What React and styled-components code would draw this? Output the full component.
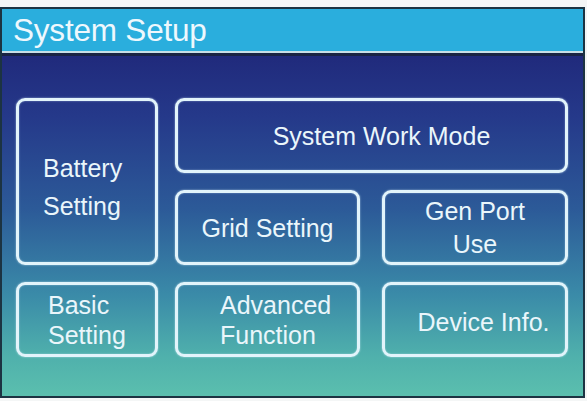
import React from "react";
import styled, { createGlobalStyle } from "styled-components";

const Global = createGlobalStyle`
  html, body { margin: 0; padding: 0; background: #f4f6f6; }
  body { font-family: "Liberation Sans", Arial, sans-serif; }
`;

const Frame = styled.div`
  margin-top: 7px;
  width: 581px;
  height: 387px;
  border: 2px solid #1c3342;
  display: flex;
  flex-direction: column;
  overflow: hidden;
`;

const Header = styled.div`
  height: 42px;
  flex: none;
  background: #2aaedd;
  border-bottom: 2px solid #c8dfe7;
  display: flex;
  align-items: center;
  padding-left: 11px;
  color: #eef8fd;
  font-size: 31.5px;
  letter-spacing: -0.2px;
`;

const Body = styled.div`
  flex: 1;
  border-top: 3px solid #1a2444;
  background: linear-gradient(180deg, #202a7c 0%, #25398a 18%, #2c5a98 45%, #3a8aa8 70%, #4fb0ac 88%, #5bbfae 100%);
  padding: 42px 0 0 14px;
`;

const Grid = styled.div`
  display: grid;
  grid-template-columns: 142px 17px 185px 22px 186px;
  grid-template-rows: 75px 17px 75px 17px 75px;
`;

const Tile = styled.div`
  grid-column: ${(p) => p.$col};
  grid-row: ${(p) => p.$row};
  box-sizing: border-box;
  border: 3px solid #e2f4fb;
  border-radius: 9px;
  box-shadow: 0 0 2px rgba(220, 245, 255, 0.7), inset 0 0 2px rgba(220, 245, 255, 0.5);
  display: flex;
  align-items: center;
  justify-content: ${(p) => (p.$left ? "flex-start" : "center")};
  text-align: ${(p) => (p.$left ? "left" : "center")};
  padding-left: ${(p) => p.$pl || 0}px;
  padding-top: ${(p) => p.$pt || 0}px;
  color: #eaf6fb;
  font-size: 25px;
  line-height: ${(p) => p.$lh || 30}px;
  white-space: nowrap;
`;

export default function App() {
  return (
    <>
      <Global />
      <Frame>
        <Header>System Setup</Header>
        <Body>
          <Grid>
            <Tile $col="1" $row="1 / 4" $left $pl={24} $pt={11} $lh={38}>
              Battery
              <br />
              Setting
            </Tile>
            <Tile $col="3 / 6" $row="1" $pl={20}>
              System Work Mode
            </Tile>
            <Tile $col="3" $row="3">
              Grid Setting
            </Tile>
            <Tile $col="5" $row="3" $lh={33} $pt={-2}>
              Gen Port
              <br />
              Use
            </Tile>
            <Tile $col="1" $row="5" $left $pl={29} $pt={-3}>
              Basic
              <br />
              Setting
            </Tile>
            <Tile $col="3" $row="5" $left $pl={42} $pt={-3}>
              Advanced
              <br />
              Function
            </Tile>
            <Tile $col="5" $row="5" $pl={17} $pt={5}>
              Device Info.
            </Tile>
          </Grid>
        </Body>
      </Frame>
    </>
  );
}
